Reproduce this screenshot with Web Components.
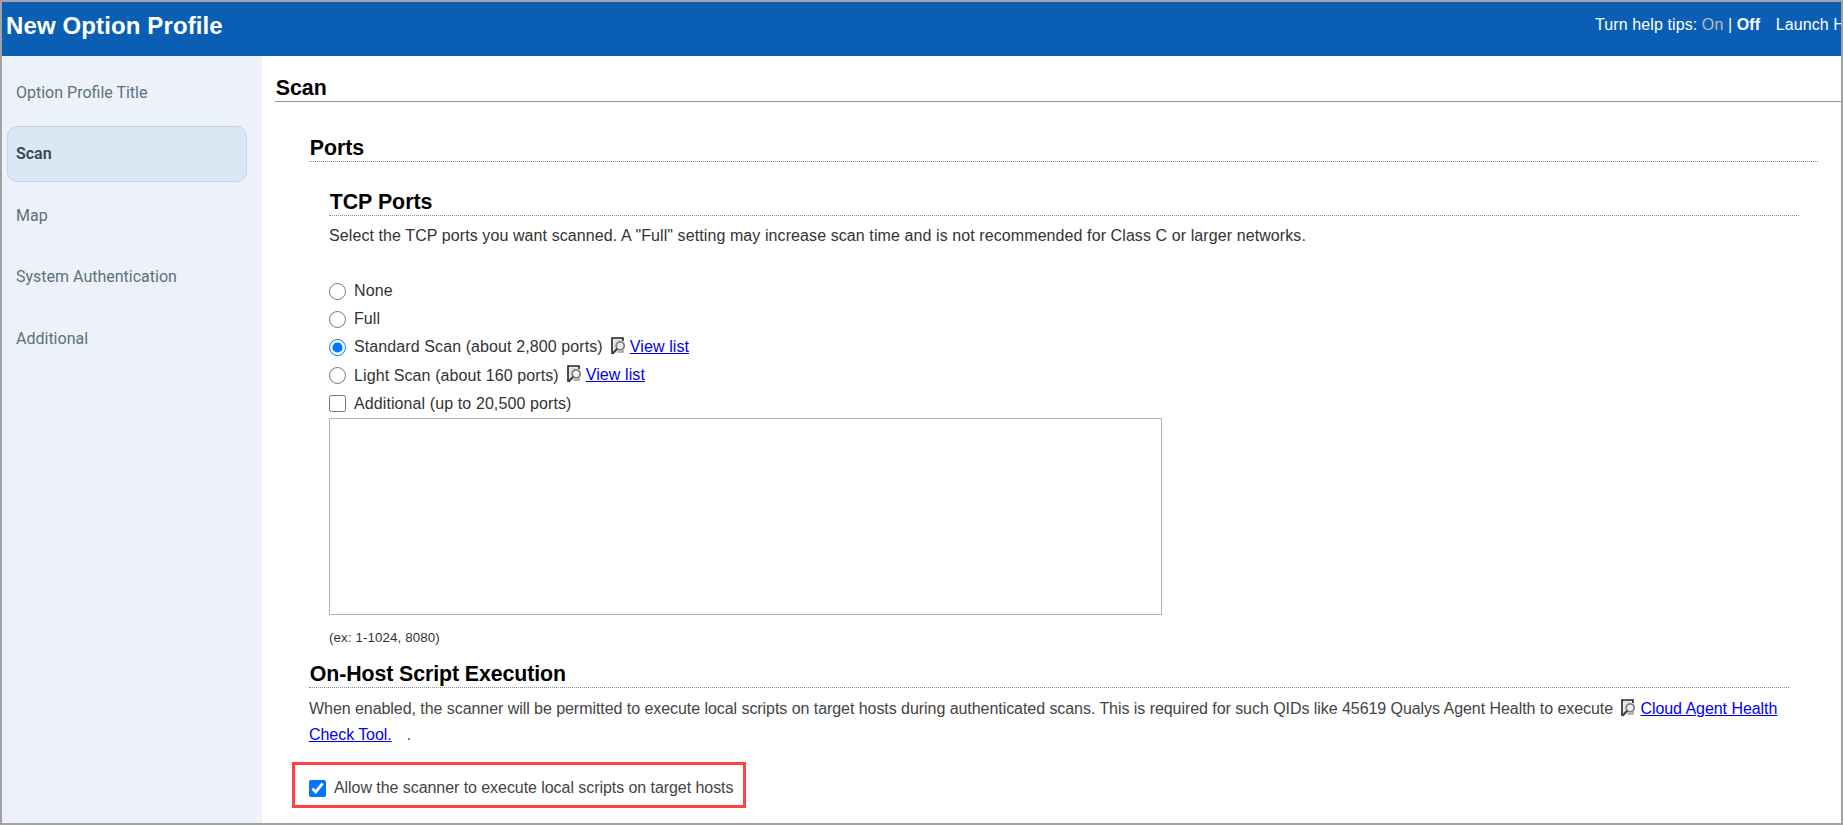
<!DOCTYPE html>
<html lang="en">
<head>
<meta charset="utf-8">
<title>New Option Profile</title>
<style>
  html, body {
    margin: 0;
    height: 100%;
    overflow: hidden;
  }

  body {
    font-family: "Liberation Sans", Arial, sans-serif;
    font-size: 16px;
    color: #333;
    background: #fff;
  }
</style>
</head>
<body>
<option-profile-window>
  <profile-header slot="header" heading="New Option Profile"></profile-header>

  <side-nav slot="nav">
    <nav-item>Option Profile Title</nav-item>
    <nav-item active>Scan</nav-item>
    <nav-item>Map</nav-item>
    <nav-item>System Authentication</nav-item>
    <nav-item>Additional</nav-item>
  </side-nav>

  <form-section heading="Scan" level="1">
    <form-section heading="Ports" level="2">
      <form-section heading="TCP Ports" level="3">
        <section-text>Select the TCP ports you want scanned. A "Full" setting may increase scan time and is not recommended for Class C or larger networks.</section-text>
        <port-options></port-options>
      </form-section>
    </form-section>
    <form-section heading="On-Host Script Execution" level="4">
      <section-text class="host">When enabled, the scanner will be permitted to execute local scripts on target hosts during authenticated scans. This is required for such QIDs like 45619 Qualys Agent Health to execute <list-link>Cloud Agent Health Check Tool.</list-link><span style="margin-left: 15px">.</span></section-text>
      <highlight-box>
        <choice-row type="checkbox" checked>Allow the scanner to execute local scripts on target hosts</choice-row>
      </highlight-box>
    </form-section>
  </form-section>
</option-profile-window>

<script>
class OptionProfileWindow extends HTMLElement {
  constructor() {
    super();
    this.attachShadow({ mode: "open" });
    this.shadowRoot.innerHTML = `
    <style>
      :host {
        display: flex;
        flex-direction: column;
        height: 100vh;
        box-sizing: border-box;
        border: 2px solid #a2a2a2;
        overflow: hidden;
      }
      .body {
        display: flex;
        flex: 1;
        min-height: 0;
      }
      main {
        flex: 1;
        min-width: 0;
        padding: 19px 0 0 13px;
      }
    </style>
    <slot name="header"></slot>
    <div class="body">
      <slot name="nav"></slot>
      <main><slot></slot></main>
    </div>`;
  }
}

class ProfileHeader extends HTMLElement {
  constructor() {
    super();
    this.attachShadow({ mode: "open" });
    this.shadowRoot.innerHTML = `
    <style>
      :host {
        display: flex;
        justify-content: space-between;
        flex: none;
        height: 54px;
        box-sizing: border-box;
        padding-left: 4px;
        background: #0a5fb4;
        color: #fff;
        overflow: hidden;
      }
      h1 {
        margin: 0;
        font-size: 24px;
        line-height: 48px;
        letter-spacing: 0.12px;
      }
      .tools {
        flex: none;
        width: 246px;
        line-height: 45px;
        letter-spacing: 0.1px;
        white-space: nowrap;
        overflow: hidden;
      }
      .on {
        color: #b8bcc2;
      }
      .launch {
        margin-left: 15.5px;
      }
    </style>
    <h1></h1>
    <div class="tools">Turn help tips: <span class="on">On</span> | <b>Off</b><span class="launch">Launch Help</span></div>`;
  }

  connectedCallback() {
    this.shadowRoot.querySelector("h1").textContent = this.getAttribute("heading");
  }
}

class SideNav extends HTMLElement {
  constructor() {
    super();
    this.attachShadow({ mode: "open" });
    this.shadowRoot.innerHTML = `
    <style>
      :host {
        display: flex;
        flex-direction: column;
        flex: none;
        gap: 5.5px;
        width: 260px;
        box-sizing: border-box;
        padding: 8.5px 15px 0 5px;
        background: #edf2fa;
      }
    </style>
    <slot></slot>`;
  }
}

class NavItem extends HTMLElement {
  constructor() {
    super();
    this.attachShadow({ mode: "open" });
    this.shadowRoot.innerHTML = `
    <style>
      :host {
        display: block;
        height: 56px;
        box-sizing: border-box;
        padding-left: 8px;
        border: 1px solid transparent;
        border-radius: 10px;
        font: 16px/54px Roboto, sans-serif;
        color: #5c717e;
      }
      :host([active]) {
        background: #dae7f4;
        border-color: #c0d6ee;
        color: #36474f;
        font-weight: 600;
      }
    </style>
    <slot></slot>`;
  }
}

class FormSection extends HTMLElement {
  constructor() {
    super();
    this.attachShadow({ mode: "open" });
    this.shadowRoot.innerHTML = `
    <style>
      :host {
        display: block;
      }
      :host([level="2"]) {
        margin: 33px 23px 0 34px;
      }
      :host([level="3"]) {
        margin: 27px 19px 0 20px;
      }
      :host([level="4"]) {
        margin: 13px 52px 0 34px;
      }
      h2 {
        margin: 0;
        padding-left: 0.7px;
        font-size: 21.33px;
        line-height: 26px;
        color: #000;
        border-bottom: 1px dotted #8c8c8c;
      }
      h2.solid {
        border-bottom: 1px solid #939393;
      }
      :host([level="4"]) h2 {
        letter-spacing: -0.09px;
      }
    </style>
    <h2></h2>
    <slot></slot>`;
  }

  connectedCallback() {
    const title = this.shadowRoot.querySelector("h2");
    title.textContent = this.getAttribute("heading");
    title.classList.toggle("solid", this.getAttribute("level") === "1");
  }
}

class SectionText extends HTMLElement {
  constructor() {
    super();
    this.attachShadow({ mode: "open" });
    this.shadowRoot.innerHTML = `
    <style>
      :host {
        display: block;
        margin-top: 7px;
        line-height: 25px;
        letter-spacing: 0.09px;
      }
      :host(.host) {
        margin-top: 8px;
        line-height: 26.4px;
        letter-spacing: -0.055px;
        color: #444;
      }
    </style>
    <slot></slot>`;
  }
}

// Link with the small "page and magnifier" icon before it
class ListLink extends HTMLElement {
  constructor() {
    super();
    this.attachShadow({ mode: "open" });
    this.shadowRoot.innerHTML = `
    <style>
      :host {
        display: inline;
      }
      svg {
        width: 14px;
        height: 18px;
        margin: 0 5px 0 4px;
        vertical-align: -3px;
      }
      a {
        color: #0000ee;
        text-decoration: underline;
      }
    </style>
    <svg viewBox="0 0 14 18">
      <path d="M1 1H12.5V14H5L1 17Z" fill="#ececec"/>
      <path d="M1 17V1H12V4" fill="none" stroke="#222" stroke-width="1.6"/>
      <path d="M3.5 3.5H9.5M3.5 6H5.5M3.5 8.5H4.5" stroke="#c2c2c2" stroke-dasharray="1 1"/>
      <path d="M6.5 15H12V13" fill="none" stroke="#9a9a9a" stroke-width="1.4"/>
      <circle cx="9.2" cy="8.8" r="4" fill="#f0f0f0" stroke="#808080" stroke-width="1.8"/>
      <path d="M6.3 11.8L1.4 16.8" stroke="#444" stroke-width="2.3"/>
    </svg><a><slot></slot></a>`;
  }
}

class ChoiceRow extends HTMLElement {
  constructor() {
    super();
    this.attachShadow({ mode: "open" });
    this.shadowRoot.innerHTML = `
    <style>
      :host {
        display: flex;
        align-items: center;
        height: 28.2px;
      }
      label {
        display: flex;
        align-items: center;
        gap: 8px;
        white-space: nowrap;
      }
      input {
        width: 17px;
        height: 17px;
        margin: 0;
        accent-color: #0075ff;
      }
      ::slotted(list-link) {
        margin: -2px 0 0 4px;
      }
    </style>
    <label><input><span><slot></slot></span></label>
    <slot name="link"></slot>`;
  }

  connectedCallback() {
    const input = this.shadowRoot.querySelector("input");
    input.type = this.getAttribute("type");
    input.checked = this.hasAttribute("checked");
  }
}

class PortOptions extends HTMLElement {
  constructor() {
    super();
    this.attachShadow({ mode: "open" });
    this.shadowRoot.innerHTML = `
    <style>
      :host {
        display: block;
        margin-top: 29px;
        letter-spacing: 0.1px;
      }
      textarea {
        display: block;
        width: 833px;
        height: 197px;
        box-sizing: border-box;
        margin: 0;
        border: 1px solid #b5b5b5;
        border-radius: 0;
        resize: none;
      }
      .hint {
        margin-top: 13px;
        font-size: 13.33px;
        line-height: 20px;
      }
    </style>
    <choice-row type="radio">None</choice-row>
    <choice-row type="radio">Full</choice-row>
    <choice-row type="radio" checked>Standard Scan (about 2,800 ports)<list-link slot="link">View list</list-link></choice-row>
    <choice-row type="radio">Light Scan (about 160 ports)<list-link slot="link">View list</list-link></choice-row>
    <choice-row type="checkbox">Additional (up to 20,500 ports)</choice-row>
    <textarea></textarea>
    <div class="hint">(ex: 1-1024, 8080)</div>`;
  }
}

class HighlightBox extends HTMLElement {
  constructor() {
    super();
    this.attachShadow({ mode: "open" });
    this.shadowRoot.innerHTML = `
    <style>
      :host {
        display: flex;
        align-items: center;
        width: 454px;
        height: 46px;
        box-sizing: border-box;
        margin: 13.2px 0 0 -17px;
        padding: 7px 0 0 14px;
        border: 3px solid #fe4143;
        color: #444;
        letter-spacing: -0.06px;
      }
    </style>
    <slot></slot>`;
  }
}

customElements.define("option-profile-window", OptionProfileWindow);
customElements.define("profile-header", ProfileHeader);
customElements.define("side-nav", SideNav);
customElements.define("nav-item", NavItem);
customElements.define("form-section", FormSection);
customElements.define("section-text", SectionText);
customElements.define("list-link", ListLink);
customElements.define("choice-row", ChoiceRow);
customElements.define("port-options", PortOptions);
customElements.define("highlight-box", HighlightBox);
</script>
</body>
</html>
